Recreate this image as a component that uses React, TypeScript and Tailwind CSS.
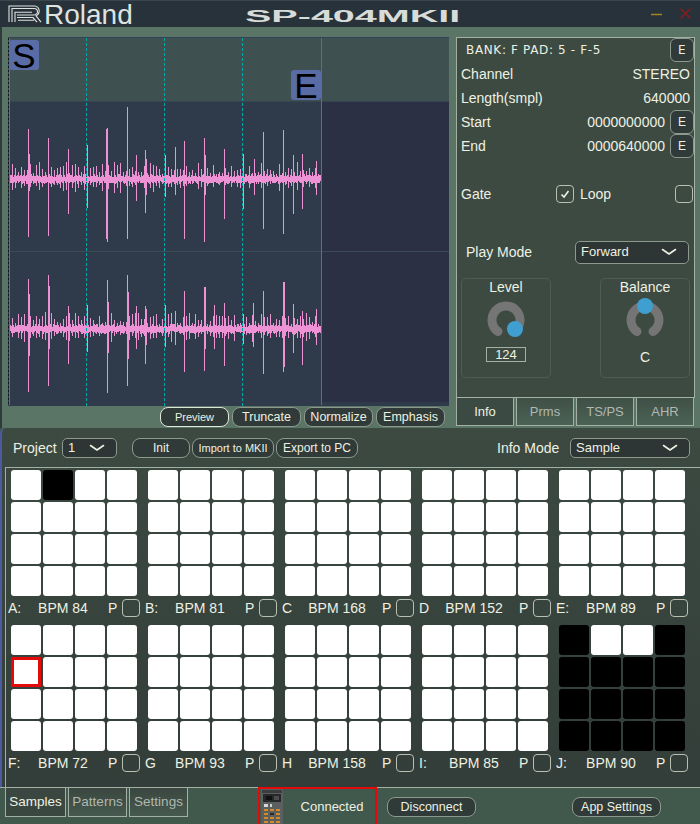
import type { ReactNode } from 'react'

const CREAM = 'text-[#eef1e2]'

function makeRng(seed: number) {
  let s = seed
  return () => {
    s = (s + 0x6d2b79f5) | 0
    let t = Math.imul(s ^ (s >>> 15), 1 | s)
    t = (t + Math.imul(t ^ (t >>> 7), 61 | t)) ^ t
    return ((t ^ (t >>> 14)) >>> 0) / 4294967296
  }
}

type Spike = [number, number, number]

const TOP_SPIKES: Spike[] = [
  [28, 50, 58], [29, 25, 12], [48, 41, 57], [68, 30, 35], [87, 34, 29], [106, 50, 60], [107, 51, 63],
  [127, 72, 60], [136, 24, 22], [145, 29, 34], [146, 20, 16], [165, 24, 18], [175, 32, 16], [184, 38, 60],
  [204, 41, 63], [205, 24, 16], [224, 30, 40], [243, 25, 30], [254, 20, 16], [263, 47, 50], [283, 49, 55],
  [293, 24, 35], [302, 25, 30], [316, 18, 16],
]

const BOTTOM_SPIKES: Spike[] = [
  [28, 50, 63], [29, 35, 27], [48, 54, 57], [49, 43, 20], [68, 23, 35], [87, 24, 23], [107, 49, 64],
  [108, 27, 24], [127, 54, 57], [128, 37, 30], [136, 23, 20], [145, 23, 35], [146, 20, 16], [165, 24, 18],
  [175, 18, 16], [184, 38, 43], [204, 42, 42], [205, 42, 20], [214, 24, 20], [224, 26, 37], [243, 15, 15], [253, 26, 18],
  [263, 38, 45], [283, 47, 43], [284, 47, 38], [293, 25, 24], [302, 18, 36], [316, 20, 16],
]

function wavePath(cy: number, seed: number, spikes: Spike[]) {
  const rng = makeRng(seed)
  let d = ''
  for (let x = 10; x <= 320; x++) {
    // every third column rises above the body, the rest stay in the thin band
    const tall = x % 3 === 0
    let up = tall ? 5 + rng() * 12 : 2 + rng() * 3
    let down = tall ? up * (0.5 + rng() * 0.4) : 2 + rng() * 3
    const spike = spikes.find(s => s[0] === x)
    if (spike) {
      up = spike[1]
      down = spike[2]
    }
    if (x > 317) {
      up = Math.min(up, 5)
      down = Math.min(down, 4)
    }
    d += `M${x + 0.5} ${cy - Math.round(up)}V${cy + Math.round(down)}`
  }
  return d
}

function WaveOverlay() {
  return (
    <svg
      className="pointer-events-none absolute top-0 left-0 h-[369px] w-[441px]"
      viewBox="8 37 441 369"
      shapeRendering="crispEdges"
    >
      <path d={wavePath(178, 11, TOP_SPIKES)} stroke="#ee92d6" strokeWidth="1" fill="none" />
      <path d={wavePath(328, 47, BOTTOM_SPIKES)} stroke="#ee92d6" strokeWidth="1" fill="none" />
      <g stroke="#00a9a9" strokeWidth="1" strokeDasharray="3 2">
        <path d="M86.5 37V406M164.5 37V406M242.5 37V406" />
      </g>
      <path d="M9.5 37V404" stroke="#5a70a8" strokeWidth="1" />
      <path d="M8.5 37V406" stroke="#10151a" strokeWidth="1" strokeDasharray="2 2" />
      <path d="M321.5 37V404" stroke="#5b6d96" strokeWidth="1" />
    </svg>
  )
}

function Marker({ label, className }: { label: string; className: string }) {
  return (
    <div
      className={`absolute flex h-[30px] w-[30px] items-center justify-center rounded-[3px] bg-[#5a6ca6] text-[35px] leading-none text-black ${className}`}
    >
      {label}
    </div>
  )
}

function Lane({ height, main, rest, className = '' }: { height: string; main: string; rest: string; className?: string }) {
  return (
    <div className={`flex ${height} ${className}`}>
      <div className={`w-[313px] ${main}`} />
      <div className={`flex-1 ${rest}`} />
    </div>
  )
}

function WavePanel() {
  return (
    <div className="relative h-[369px] w-[441px] overflow-hidden border-t border-[#33445a] bg-[#2f3b4a]">
      <Lane height="h-[64px]" main="bg-[#3e5050]" rest="bg-[#3e5050]" className="border-b border-[#364552]" />
      <Lane height="h-[150px]" main="bg-[#2f3b4a]" rest="bg-[#2c3044]" className="border-b border-[#3c4a58]" />
      <Lane height="h-[150px]" main="bg-[#2f3b4a]" rest="bg-[#2c3044]" />
      <WaveOverlay />
      <Marker label="S" className="top-[2px] left-[1px]" />
      <Marker label="E" className="top-[32px] left-[283px]" />
    </div>
  )
}

function Btn({ children, className = '' }: { children: ReactNode; className?: string }) {
  return (
    <div
      className={`flex h-[20px] items-center justify-center rounded-[8px] border border-[#8d988f] bg-[#303a38] leading-none ${CREAM} ${className}`}
    >
      {children}
    </div>
  )
}

function EBtn() {
  return (
    <div className={`flex h-[24px] w-[24px] items-center justify-center rounded-[6px] border border-[#8d988f] bg-[#303a38] text-[12px] ${CREAM}`}>
      E
    </div>
  )
}

function Chevron() {
  return (
    <svg width="16" height="8" viewBox="0 0 16 8" fill="none">
      <path d="M1.5 1.5 8 6l6.5-4.5" stroke="#eef1e2" strokeWidth="1.6" strokeLinecap="round" strokeLinejoin="round" />
    </svg>
  )
}

function Select({ value, className }: { value: string; className: string }) {
  return (
    <div
      className={`flex items-center justify-between rounded-[5px] border border-[#8d988f] bg-[#2d3635] pr-[11px] pl-[5px] text-[13px] ${CREAM} ${className}`}
    >
      <span>{value}</span>
      <Chevron />
    </div>
  )
}

function Check({ checked = false }: { checked?: boolean }) {
  return (
    <div className="flex h-[18px] w-[18px] shrink-0 items-center justify-center rounded-[4px] border border-[#b9c0b2]">
      {checked && (
        <svg width="10" height="10" viewBox="0 0 10 10" fill="none">
          <path d="M1.5 5.500 4 8l4.500-6" stroke="#eef1e2" strokeWidth="1.6" />
        </svg>
      )}
    </div>
  )
}

function Knob({ thumb, split = false }: { thumb: [number, number]; split?: boolean }) {
  return (
    <svg width="44" height="44" viewBox="0 0 44 44" fill="none" className="block">
      <path
        d={split ? 'M14 33.500A14 14 0 0 1 22 8.500' : 'M14 33.500A14 14 0 1 1 30 33.500'}
        stroke="#757575"
        strokeWidth="9"
        strokeLinecap="round"
      />
      {split && <path d="M22 8.500A14 14 0 0 1 30 33.500" stroke="#555555" strokeWidth="9" strokeLinecap="round" />}
      <circle cx={thumb[0]} cy={thumb[1]} r="8" fill="#3e9fd0" />
    </svg>
  )
}

function KnobBox({ title, children }: { title: string; children: ReactNode }) {
  return (
    <div className={`flex h-[100px] w-[90px] flex-col items-center rounded-[5px] border border-[#4d5c54] text-[14px] ${CREAM}`}>
      <div className="h-[19px] leading-[17px]">{title}</div>
      {children}
    </div>
  )
}

function InfoRow({ label, children }: { label: string; children: ReactNode }) {
  return (
    <div className={`flex h-[24px] items-center justify-between pl-[4px] text-[14px] ${CREAM}`}>
      <span>{label}</span>
      <div className="flex items-center gap-[5px]">{children}</div>
    </div>
  )
}

function Tab({ label, active = false, width }: { label: string; active?: boolean; width: string }) {
  return (
    <div
      className={`flex h-[28px] items-center justify-center border border-t-0 border-[#a3b0a4] text-[13px] ${width} ${
        active ? 'bg-[#3b4a42] text-[#eef1e2]' : 'bg-gradient-to-b from-[#3f5047] to-[#4c6256] text-[#b0b8b0]'
      }`}
    >
      {label}
    </div>
  )
}

function InfoPanel() {
  return (
    <div className="w-[239px]">
      <div className="h-[361px] border border-[#a3b0a4] bg-[#3c4a42]">
        <div className={`flex h-[24px] items-center justify-between pl-[9px] text-[12px] tracking-[0.65px] ${CREAM}`} style={{ fontFamily: '"DejaVu Sans", sans-serif' }}>
          <span>BANK: F PAD: 5 - F-5</span>
          <EBtn />
        </div>
        <InfoRow label="Channel">
          <span className="pr-[4px]">STEREO</span>
        </InfoRow>
        <InfoRow label="Length(smpl)">
          <span className="pr-[4px]">640000</span>
        </InfoRow>
        <InfoRow label="Start">
          <span>0000000000</span>
          <EBtn />
        </InfoRow>
        <InfoRow label="End">
          <span>0000640000</span>
          <EBtn />
        </InfoRow>
        <div className={`mt-[24px] flex h-[24px] items-center pl-[4px] text-[14px] ${CREAM}`}>
          <span className="w-[95px]">Gate</span>
          <Check checked />
          <span className="ml-[6px] w-[95px]">Loop</span>
          <Check />
        </div>
        <div className={`mt-[34px] flex h-[24px] items-center pl-[9px] text-[14px] ${CREAM}`}>
          <span className="w-[109px]">Play Mode</span>
          <Select value="Forward" className="h-[23px] w-[114px]" />
        </div>
        <div className="mt-[14px] flex justify-between px-[4px]">
          <KnobBox title="Level">
            <Knob thumb={[31, 31]} />
            <div className="mt-[5px] flex h-[15px] w-[40px] items-center justify-center border border-[#a3b0a4] text-[13px] leading-none">124</div>
          </KnobBox>
          <KnobBox title="Balance">
            <Knob thumb={[22, 8]} />
            <div className="mt-[8px] text-[14px] leading-[15px]">C</div>
          </KnobBox>
        </div>
      </div>
      <div className="flex gap-[2px]">
        <Tab label="Info" active width="w-[58px]" />
        <Tab label="Prms" width="w-[58px]" />
        <Tab label="TS/PS" width="w-[58px]" />
        <Tab label="AHR" width="w-[58px]" />
      </div>
    </div>
  )
}

function Pad({ state }: { state: 'white' | 'black' | 'selected' }) {
  if (state === 'selected') return <div className="h-[30px] w-[30px] border-[3px] border-[#e40a0a] bg-white" />
  return <div className={`h-[30px] w-[30px] rounded-[3px] ${state === 'black' ? 'bg-black' : 'bg-white'}`} />
}

interface Bank {
  letter: string
  bpm: number
  black?: number[]
  selected?: number
}

const ALL_BLACK = [0, 3, 4, 5, 6, 7, 8, 9, 10, 11, 12, 13, 14, 15]

const BANKS: Bank[] = [
  { letter: 'A:', bpm: 84, black: [1] },
  { letter: 'B:', bpm: 81 },
  { letter: 'C', bpm: 168 },
  { letter: 'D', bpm: 152 },
  { letter: 'E:', bpm: 89 },
  { letter: 'F:', bpm: 72, selected: 4 },
  { letter: 'G', bpm: 93 },
  { letter: 'H', bpm: 158 },
  { letter: 'I:', bpm: 85 },
  { letter: 'J:', bpm: 90, black: ALL_BLACK },
]

function PadBank({ bank }: { bank: Bank }) {
  return (
    <div className="w-[137px]">
      <div className="ml-[3px] grid w-[126px] grid-cols-4 gap-[2px]">
        {Array.from({ length: 16 }, (_, i) => (
          <Pad key={i} state={bank.selected === i ? 'selected' : bank.black?.includes(i) ? 'black' : 'white'} />
        ))}
      </div>
      <div className={`flex h-[29px] items-center pb-[5px] text-[14px] ${CREAM}`}>
        <span className="w-[20px]">{bank.letter}</span>
        <span className="w-[70px] text-center">BPM {bank.bpm}</span>
        <span className="ml-[10px] w-[14px]">P</span>
        <Check />
      </div>
    </div>
  )
}

function DeviceThumb() {
  return (
    <svg width="22" height="35" viewBox="0 0 22 35" className="block" shapeRendering="crispEdges">
      <rect width="22" height="35" fill="#5b5f60" />
      <rect x="1" y="1" width="20" height="3" fill="#3a3c3d" />
      <rect x="2" y="5" width="18" height="8" fill="#26282a" />
      <rect x="5" y="7" width="6" height="4" fill="#111111" />
      <rect x="13" y="7" width="5" height="4" fill="#4a4c4d" />
      <rect x="3" y="15" width="4" height="3" fill="#d8d8d8" />
      <rect x="9" y="15" width="2" height="3" fill="#cfcfcf" />
      {[20, 24, 28, 32].map(y => (
        <g key={y}>
          <rect x="3" y={y} width="4" height="2" fill="#d58a26" />
          <rect x="9" y={y} width="4" height="2" fill={y === 24 ? '#2a2a2a' : '#d58a26'} />
          <rect x="15" y={y} width="4" height="2" fill="#d58a26" />
        </g>
      ))}
    </svg>
  )
}

function RolandMark() {
  return (
    <svg width="35" height="18" viewBox="0 0 35 20" preserveAspectRatio="none" fill="none" className="block">
      <g stroke="#dfe3e0" strokeWidth="1.1">
        <path d="M1 19V1h26a6 6 0 0 1 1 11l5 7" />
        <path d="M4 19V4h22a3.500 3.500 0 0 1 0 7H9" />
        <path d="M7 19V8h17" />
        <path d="M9 14h16l4 5M10 17h16" />
      </g>
    </svg>
  )
}

function TitleBar() {
  return (
    <div className="flex h-[27px] items-center border-t border-[#3a464b] bg-[#28323a] pl-[8px]">
      <RolandMark />
      <div className="mt-[1px] ml-[1px] text-[28px] leading-none text-[#dfe3e0]">Roland</div>
      <div className="mt-[6px] ml-[112px] w-[88px] origin-left scale-x-[2.47] text-[16px] leading-none font-bold text-[#d8dcd9]">SP-404MKII</div>
      <div className="-mt-[1px] ml-auto flex items-center gap-[18px] pr-[9px]">
        <svg width="11" height="11" viewBox="0 0 11 11" fill="none">
          <path d="M0 6.500h11" stroke="#a08520" strokeWidth="1.5" />
        </svg>
        <svg width="11" height="11" viewBox="0 0 11 11" fill="none">
          <path d="M.5.500l10 10M10.500.500l-10 10" stroke="#8e1b1b" strokeWidth="1.2" />
        </svg>
      </div>
    </div>
  )
}

function BottomTab({ label, active = false, width }: { label: string; active?: boolean; width: string }) {
  return (
    <div
      className={`flex h-[29px] items-center justify-center border border-t-0 border-[#a3b0a4] text-[13.500px] ${width} ${
        active ? 'bg-[#3a4740] text-[#eef1e2]' : 'bg-gradient-to-b from-[#3a4740] to-[#46594f] text-[#b0b8b0]'
      }`}
    >
      {label}
    </div>
  )
}

export default function App() {
  return (
    <div className="flex h-[824px] w-[700px] flex-col overflow-hidden bg-[#41584d]" style={{ fontFamily: '"Liberation Sans", Arial, sans-serif' }}>
      <TitleBar />
      <div className="flex h-[401px] border-l-[2px] border-[#2f3a3c] bg-[#5a7565]">
        <div className="w-[448px] pt-[10px] pl-[6px]">
          <WavePanel />
          <div className="mt-[1px] flex gap-[3px] pl-[152px] text-[12.500px]">
            <Btn className="w-[69px] border-[#dfe6dc] bg-[#4c665a] text-[11px]">Preview</Btn>
            <Btn className="w-[69px]">Truncate</Btn>
            <Btn className="w-[69px]">Normalize</Btn>
            <Btn className="w-[69px]">Emphasis</Btn>
          </div>
        </div>
        <div className="pt-[10px] pl-[6px]">
          <InfoPanel />
        </div>
      </div>

      <div className="flex h-[359px] flex-col rounded-tl-[6px] border-l-[2px] border-[#4d5aa0] bg-gradient-to-b from-[#3c4a42] to-[#333d39]">
        <div className={`flex h-[39px] items-center pt-[1px] pl-[11px] text-[14px] ${CREAM}`}>
          <span className="w-[49px]">Project</span>
          <Select value="1" className="h-[20px] w-[55px]" />
          <div className="ml-[15px] flex gap-[2px] text-[12px]">
            <Btn className="w-[58px]">Init</Btn>
            <Btn className="w-[82px] text-[11px]">Import to MKII</Btn>
            <Btn className="w-[82px]">Export to PC</Btn>
          </div>
          <span className="ml-[139px] w-[73px]">Info Mode</span>
          <Select value="Sample" className="h-[20px] w-[120px]" />
        </div>
        <div className="ml-[3px] flex-1 border-t border-l border-[#a3b0a4] pt-[2px] pl-[2px]">
          <div className="grid w-[685px] grid-cols-5">
            {BANKS.map(bank => (
              <PadBank key={bank.letter} bank={bank} />
            ))}
          </div>
        </div>
      </div>

      <div className="flex h-[37px] flex-1 border-t border-[#a3b0a4] pl-[5px]">
        <div className="flex w-[253px] gap-[2px]">
          <BottomTab label="Samples" active width="w-[61px]" />
          <BottomTab label="Patterns" width="w-[59px]" />
          <BottomTab label="Settings" width="w-[59px]" />
        </div>
        <div className="-mt-px flex w-[119px] border-x-2 border-t-2 border-[#e40a0a] pl-[1px]">
          <DeviceThumb />
          <div className={`flex flex-1 items-center justify-center pl-[6px] text-[13px] ${CREAM}`}>Connected</div>
        </div>
        <div className="flex items-center pt-[2px] pl-[10px] text-[12.500px]">
          <Btn className="w-[89px]">Disconnect</Btn>
          <Btn className="ml-[96px] w-[89px]">App Settings</Btn>
        </div>
      </div>
    </div>
  )
}
